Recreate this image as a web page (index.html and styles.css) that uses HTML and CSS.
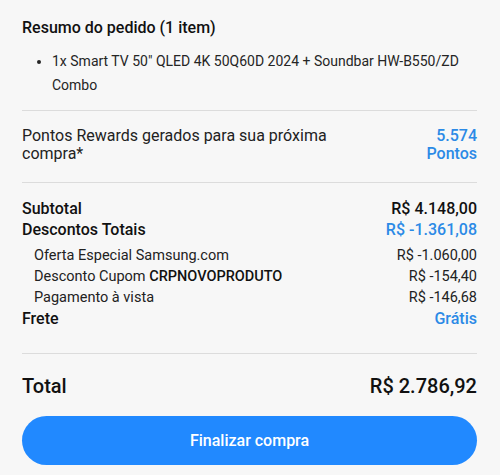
FILE: index.html
```html
<!DOCTYPE html>
<html lang="pt-BR">
<head>
<meta charset="utf-8">
<link rel="stylesheet" href="styles.css">
</head>
<body>
<div class="summary">
  <section class="order">
    <h2 class="title">Resumo do pedido (1 item)</h2>
    <ul class="items">
      <li>1x Smart TV 50" QLED 4K 50Q60D 2024 + Soundbar HW-B550/ZD Combo</li>
    </ul>
  </section>
  <section class="rewards">
    <div class="rewards-label">Pontos Rewards gerados para sua próxima compra*</div>
    <div class="rewards-value">5.574<br>Pontos</div>
  </section>
  <section class="costs">
    <div class="row strong"><span>Subtotal</span><span>R$ 4.148,00</span></div>
    <div class="row strong"><span>Descontos Totais</span><span class="blue">R$ -1.361,08</span></div>
    <div class="row sub"><span>Oferta Especial Samsung.com</span><span>R$ -1.060,00</span></div>
    <div class="row sub"><span>Desconto Cupom <b>CRPNOVOPRODUTO</b></span><span>R$ -154,40</span></div>
    <div class="row sub"><span>Pagamento à vista</span><span>R$ -146,68</span></div>
    <div class="row strong"><span>Frete</span><span class="blue">Grátis</span></div>
  </section>
  <section class="total">
    <div class="row total-row"><span>Total</span><span>R$ 2.786,92</span></div>
    <button class="checkout">Finalizar compra</button>
  </section>
</div>
</body>
</html>
```
FILE: styles.css
```css
* { box-sizing: border-box; }
html, body { margin: 0; padding: 0; }
body {
  background: #f7f7f7;
  font-family: Roboto, "Noto Sans", sans-serif;
  color: #111;
  width: 500px;
  height: 475px;
  overflow: hidden;
}
.summary {
  padding: 0 23px 0 22px;
}
.order {
  padding-top: 16px;
  padding-bottom: 13px;
  border-bottom: 1px solid #dcdcdc;
}
.title {
  margin: 0;
  font-size: 16px;
  font-weight: 500;
  line-height: 24px;
}
.items {
  margin: 9px 0 0;
  padding-left: 30px;
  font-size: 14px;
  line-height: 24px;
  color: #252525;
}
.rewards {
  display: flex;
  justify-content: space-between;
  padding: 16px 0 19px;
  border-bottom: 1px solid #dcdcdc;
  font-size: 16px;
  line-height: 18px;
}
.rewards-label {
  width: 320px;
  color: #222;
}
.rewards-value {
  text-align: right;
  color: #2b8ae6;
  font-weight: 500;
}
.costs {
  padding: 15px 0 24px;
  border-bottom: 1px solid #dcdcdc;
}
.row {
  display: flex;
  justify-content: space-between;
  align-items: baseline;
}
.strong {
  font-size: 16px;
  font-weight: 500;
  line-height: 21px;
}
.sub {
  font-size: 14.5px;
  line-height: 21px;
  padding-left: 12px;
  color: #222;
}
.sub b { font-weight: 500; color: #111; }
.blue { color: #2b8ae6; }
.strong + .sub { margin-top: 5px; }
.total {
  padding-top: 20px;
}
.total-row {
  font-size: 20px;
  font-weight: 500;
  line-height: 24px;
}
.checkout {
  display: block;
  width: 100%;
  height: 49px;
  margin-top: 18px;
  border: none;
  border-radius: 25px;
  background: #2189ff;
  color: #fff;
  font-family: inherit;
  font-size: 16px;
  font-weight: 500;
}
```
